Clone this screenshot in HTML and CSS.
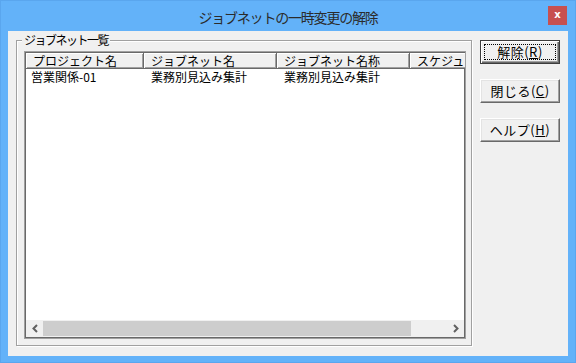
FILE: index.html
```html
<!DOCTYPE html>
<html lang="ja">
<head>
  <meta charset="UTF-8" />
  <title>ジョブネットの一時変更の解除</title>
  <link rel="stylesheet" href="styles.css">
</head>
<body>
  <div class="window">
    <div class="titlebar">
      <span class="title">ジョブネットの一時変更の解除</span>
      <span class="close">x</span>
    </div>

    <div class="client">
      <!-- Jobnet list group -->
      <div class="group">
        <span class="group-title">ジョブネット一覧</span>
        <div class="list">
          <div class="list-head">
            <div class="hcell col1">プロジェクト名</div>
            <div class="hcell col2">ジョブネット名</div>
            <div class="hcell col3">ジョブネット名称</div>
            <div class="hcell col4">スケジュ</div>
          </div>
          <div class="list-body">
            <div class="row">
              <div class="cell col1">営業関係-01</div>
              <div class="cell col2">業務別見込み集計</div>
              <div class="cell col3">業務別見込み集計</div>
              <div class="cell col4"></div>
            </div>
          </div>
          <div class="hscroll">
            <div class="arrow">
              <svg width="8" height="9" viewBox="0 0 8 9"><polyline points="6,1 2.5,4.5 6,8" fill="none" stroke="#606060" stroke-width="2"/></svg>
            </div>
            <div class="thumb"></div>
            <div class="track"></div>
            <div class="arrow">
              <svg width="8" height="9" viewBox="0 0 8 9"><polyline points="2,1 5.5,4.5 2,8" fill="none" stroke="#606060" stroke-width="2"/></svg>
            </div>
          </div>
        </div>
      </div>

      <!-- Buttons -->
      <div class="buttons">
        <button class="btn default"><span class="focus">解除(<u>R</u>)</span></button>
        <button class="btn"><span class="focus-off">閉じる(<u>C</u>)</span></button>
        <button class="btn"><span class="focus-off">ヘルプ(<u>H</u>)</span></button>
      </div>
    </div>
  </div>
</body>
</html>
```

FILE: styles.css
```css
*{
  margin: 0;
  padding: 0;
  box-sizing: border-box;
}

body {
  font-family: "Noto Sans CJK JP", "Liberation Sans", sans-serif;
  font-size: 12px;
  color: #000;
  background: #63b2f9;
}

.window {
  width: 576px;
  height: 363px;
  background-color: #63b2f9;
  border: 1px solid #5aa6ee;
  display: flex;
  flex-direction: column;
}

.titlebar {
  position: relative;
  height: 30px;
  display: flex;
  align-items: center;
  justify-content: center;
}

.title {
  font-size: 14px;
  letter-spacing: -1.2px;
  color: #2b2b2b;
  margin-top: 1px;
}

.close {
  position: absolute;
  right: 8px;
  top: 5px;
  width: 19px;
  height: 19px;
  background-color: #c75050;
  color: #fff;
  font-family: "DejaVu Sans", sans-serif;
  font-weight: bold;
  font-size: 10px;
  line-height: 17px;
  text-align: center;
}

.client {
  margin: 0 7px 6px 7px;
  height: 325px;
  background-color: #f0f0f0;
  padding: 9px 8px 9px 8px;
  display: flex;
  gap: 8px;
}

.group {
  position: relative;
  width: 456px;
  height: 306px;
  border: 1px solid #a0a0a0;
  box-shadow: 1px 1px 0 #fff, inset 1px 1px 0 #fff;
  padding: 10px 5px 6px 7px;
}

.group-title {
  position: absolute;
  left: 5px;
  top: -9px;
  padding: 0 2px;
  background-color: #f0f0f0;
  font-size: 12px;
  letter-spacing: -1.5px;
  line-height: 16px;
}

.list {
  width: 442px;
  height: 288px;
  border: 1px solid #a0a0a0;
  padding: 1px;
  box-shadow: inset 0 0 0 1px #696969;
  background-color: #fff;
  display: flex;
  flex-direction: column;
  overflow: hidden;
}

.list-head {
  display: flex;
  height: 16px;
  flex: none;
}

.hcell {
  flex: none;
  height: 16px;
  background-color: #f0f0f0;
  border-right: 1px solid #696969;
  border-bottom: 1px solid #696969;
  box-shadow: inset 1px 1px 0 #fff, inset -1px -1px 0 #a0a0a0;
  padding-left: 7px;
  line-height: 15px;
  white-space: nowrap;
  overflow: hidden;
}

.col1 { width: 118px; }
.col2 { width: 133px; }
.col3 { width: 133px; }
.col4 { width: 100px; }

.list-body {
  flex: 1;
}

.row {
  display: flex;
  height: 16px;
  line-height: 16px;
}

.cell {
  flex: none;
  padding-left: 7px;
  white-space: nowrap;
}

.cell.col1 {
  padding-left: 5px;
}

.hscroll {
  flex: none;
  height: 17px;
  display: flex;
  background-color: #f0f0f0;
}

.arrow {
  width: 17px;
  display: flex;
  align-items: center;
  justify-content: center;
}

.thumb {
  width: 368px;
  margin: 1px 0;
  background-color: #cdcdcd;
}

.track {
  flex: 1;
}

.buttons {
  display: flex;
  flex-direction: column;
  gap: 15px;
}

.btn {
  width: 80px;
  height: 24px;
  background-color: #f0f0f0;
  font-family: "Noto Sans CJK JP", "Liberation Sans", sans-serif;
  font-size: 13px;
  letter-spacing: 0.5px;
  color: #000;
  border: 1px solid;
  border-color: #fff #696969 #696969 #fff;
  box-shadow: inset -1px -1px 0 #a0a0a0, inset 1px 1px 0 #e3e3e3;
  display: flex;
  align-items: center;
  justify-content: center;
  padding: 0;
}

.btn.default {
  border: 1px solid #3c3c3c;
  box-shadow: inset 1px 1px 0 #fff, inset -1px -1px 0 #696969, inset -2px -2px 0 #a0a0a0;
}

.focus {
  width: 72px;
  height: 16px;
  border: 1px dotted #000;
  line-height: 14px;
  text-align: center;
}

.focus-off {
  line-height: 14px;
}

u {
  text-underline-offset: 1px;
}
```
